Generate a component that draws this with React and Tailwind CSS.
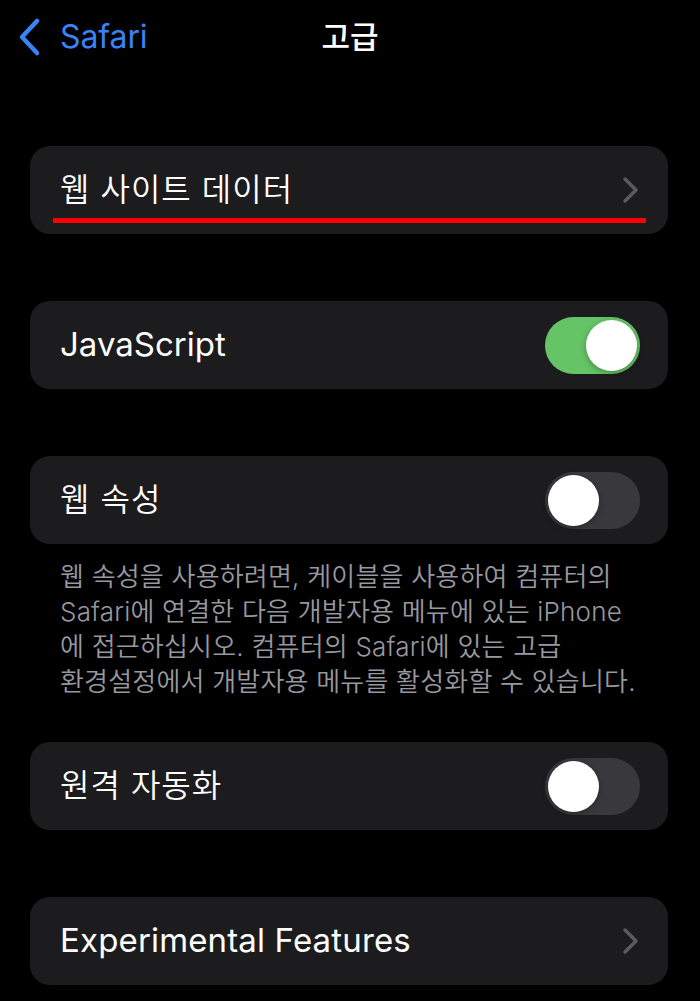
import React from "react";

const font = { fontFamily: '"Inter", "Noto Sans CJK KR", sans-serif' };

function Chevron() {
  return (
    <svg width="18" height="28" viewBox="0 0 18 28" className="shrink-0">
      <path d="M3 3 L14 14 L3 25" fill="none" stroke="#5b5b5f" strokeWidth="3.5" strokeLinecap="round" strokeLinejoin="round" />
    </svg>
  );
}

function Toggle({ on }) {
  return (
    <div
      className={
        "w-[95px] h-[57px] rounded-full p-[3px] flex items-center shrink-0 " +
        (on ? "bg-[#65c466] justify-end" : "bg-[#39393d] justify-start")
      }
    >
      <div className="w-[51px] h-[51px] rounded-full bg-white shadow-[0_2px_6px_rgba(0,0,0,0.3)]" />
    </div>
  );
}

function Card({ children, className = "" }) {
  return (
    <div className={"relative ml-[30px] mr-[32px] h-[88px] rounded-[20px] bg-[#1c1c1e] flex items-center justify-between pl-[30px] pr-[28px] " + className}>
      {children}
    </div>
  );
}

export default function App() {
  return (
    <div className="w-[700px] h-[1001px] bg-black text-white overflow-hidden" style={font}>
      <div className="relative h-[146px]">
        <div className="absolute left-[16px] top-[16px] flex items-center gap-[16px]">
          <svg width="28" height="42" viewBox="0 0 28 42">
            <path d="M21 5 L6 21 L21 37" fill="none" stroke="#3a82f7" strokeWidth="4.5" strokeLinecap="round" strokeLinejoin="round" />
          </svg>
          <span className="text-[32px] leading-[42px] text-[#3a82f7] tracking-[-0.1px]">Safari</span>
        </div>
        <div className="absolute left-0 right-0 top-[14px] text-center text-[31px] leading-[46px] font-medium">고급</div>
      </div>

      <Card>
        <span className="text-[32px] font-[350] tracking-[1px]">웹 사이트 데이터</span>
        <Chevron />
        <div className="absolute left-[23px] top-[72px] w-[593px] h-[5px] bg-[#ff0000]" />
      </Card>

      <Card className="mt-[67px]">
        <span className="text-[33px] tracking-[0px]">JavaScript</span>
        <Toggle on />
      </Card>

      <Card className="mt-[67px]">
        <span className="text-[32px] font-[350] tracking-[1px]">웹 속성</span>
        <Toggle />
      </Card>

      <p className="mt-[15px] ml-[60px] text-[26px] leading-[35px] text-[#98989f] font-[350] tracking-[0.2px] whitespace-nowrap">
        웹 속성을 사용하려면, 케이블을 사용하여 컴퓨터의
        <br />
        Safari에 연결한 다음 개발자용 메뉴에 있는 iPhone
        <br />
        에 접근하십시오. 컴퓨터의 Safari에 있는 고급
        <br />
        환경설정에서 개발자용 메뉴를 활성화할 수 있습니다.
      </p>

      <Card className="mt-[43px]">
        <span className="text-[32px] font-[350] tracking-[1px]">원격 자동화</span>
        <Toggle />
      </Card>

      <Card className="mt-[67px]">
        <span className="text-[33px] tracking-[0.15px]">Experimental Features</span>
        <Chevron />
      </Card>
    </div>
  );
}
